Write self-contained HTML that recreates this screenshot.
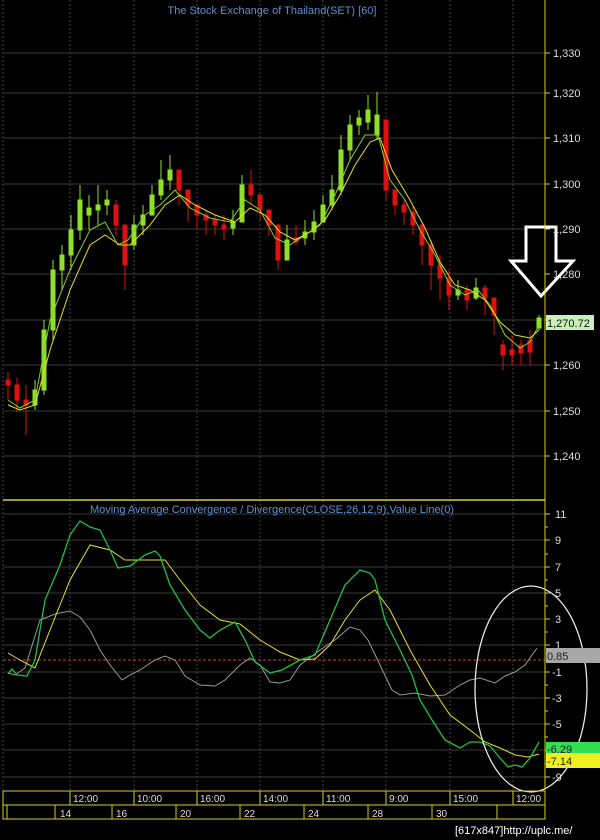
<!DOCTYPE html>
<html><head><meta charset="utf-8"><style>
html,body{margin:0;padding:0;background:#000;width:600px;height:840px;overflow:hidden}
svg{display:block}
text{font-family:"Liberation Sans",sans-serif}
</style></head><body>
<svg width="600" height="840" viewBox="0 0 600 840" xmlns="http://www.w3.org/2000/svg">
<rect width="600" height="840" fill="#000"/>
<!-- grid -->
<g stroke="#3a3a3a" stroke-width="1">
<line x1="3" y1="53" x2="545" y2="53"/><line x1="3" y1="93" x2="545" y2="93"/><line x1="3" y1="138" x2="545" y2="138"/><line x1="3" y1="184" x2="545" y2="184"/><line x1="3" y1="229" x2="545" y2="229"/><line x1="3" y1="274" x2="545" y2="274"/><line x1="3" y1="320" x2="545" y2="320"/><line x1="3" y1="365" x2="545" y2="365"/><line x1="3" y1="411" x2="545" y2="411"/><line x1="3" y1="456" x2="545" y2="456"/>
<line x1="3" y1="514" x2="545" y2="514"/><line x1="3" y1="540" x2="545" y2="540"/><line x1="3" y1="567" x2="545" y2="567"/><line x1="3" y1="593" x2="545" y2="593"/><line x1="3" y1="619" x2="545" y2="619"/><line x1="3" y1="645" x2="545" y2="645"/><line x1="3" y1="672" x2="545" y2="672"/><line x1="3" y1="698" x2="545" y2="698"/><line x1="3" y1="724" x2="545" y2="724"/><line x1="3" y1="750" x2="545" y2="750"/><line x1="3" y1="777" x2="545" y2="777"/>
</g>
<g stroke="#444" stroke-dasharray="2,2">
<line x1="3" y1="0" x2="3" y2="790"/><line x1="70" y1="0" x2="70" y2="790"/><line x1="134" y1="0" x2="134" y2="790"/><line x1="197" y1="0" x2="197" y2="790"/><line x1="260" y1="0" x2="260" y2="790"/><line x1="323" y1="0" x2="323" y2="790"/><line x1="386" y1="0" x2="386" y2="790"/><line x1="450" y1="0" x2="450" y2="790"/><line x1="513" y1="0" x2="513" y2="790"/>
</g>
<text x="272" y="14" fill="#5d8fd0" font-size="11" text-anchor="middle">The Stock Exchange of Thailand(SET) [60]</text>
<!-- candles -->
<g fill="#e01010" stroke="#e01010">
<path d="M8 372V400M17 378V412M26 385V435M116 200V235M125 240V290M179 180V205M188 195V222M197 205V230M206 210V235M215 215V235M224 215V240M251 170V205M260 195V220M269 210V235M278 235V270M296 225V245M386 120V200M395 195V215M404 200V225M413 205V235M422 225V265M431 240V290M440 255V300M449 270V310M467 285V310M485 285V315M494 300V335M503 340V370M512 335V365M521 340V365M530 330V365" fill="none"/>
<rect x="6" y="380" width="4" height="5"/><rect x="15" y="385" width="4" height="15"/><rect x="24" y="400" width="4" height="5"/><rect x="114" y="205" width="4" height="20"/><rect x="123" y="225" width="4" height="40"/><rect x="177" y="170" width="4" height="20"/><rect x="186" y="190" width="4" height="15"/><rect x="195" y="205" width="4" height="10"/><rect x="204" y="215" width="4" height="5"/><rect x="213" y="220" width="4" height="5"/><rect x="222" y="225" width="4" height="4"/><rect x="249" y="185" width="4" height="10"/><rect x="258" y="195" width="4" height="15"/><rect x="267" y="210" width="4" height="15"/><rect x="276" y="225" width="4" height="35"/><rect x="294" y="238" width="4" height="4"/><rect x="384" y="120" width="4" height="70"/><rect x="393" y="190" width="4" height="15"/><rect x="402" y="205" width="4" height="7"/><rect x="411" y="212" width="4" height="13"/><rect x="420" y="225" width="4" height="20"/><rect x="429" y="245" width="4" height="20"/><rect x="438" y="265" width="4" height="13"/><rect x="447" y="278" width="4" height="17"/><rect x="465" y="290" width="4" height="10"/><rect x="483" y="288" width="4" height="10"/><rect x="492" y="298" width="4" height="17"/><rect x="501" y="345" width="4" height="10"/><rect x="510" y="350" width="4" height="5"/><rect x="519" y="345" width="4" height="8"/><rect x="528" y="340" width="4" height="12"/>
</g>
<g fill="#8fe02a" stroke="#8fe02a">
<path d="M35 380V410M44 320V395M53 260V340M62 245V290M71 215V270M80 185V240M89 195V230M98 185V225M107 190V215M134 215V250M143 205V235M152 185V215M161 160V200M170 155V190M233 210V235M242 175V200M287 225V260M305 220V245M314 210V240M323 195V220M332 175V210M341 135V195M350 115V160M359 110V135M368 95V130M377 92V140M458 280V300M476 278V300M539 315V330" fill="none"/>
<rect x="33" y="390" width="4" height="15"/><rect x="42" y="330" width="4" height="60"/><rect x="51" y="270" width="4" height="60"/><rect x="60" y="255" width="4" height="15"/><rect x="69" y="230" width="4" height="25"/><rect x="78" y="200" width="4" height="30"/><rect x="87" y="208" width="4" height="7"/><rect x="96" y="205" width="4" height="5"/><rect x="105" y="200" width="4" height="5"/><rect x="132" y="225" width="4" height="20"/><rect x="141" y="215" width="4" height="10"/><rect x="150" y="195" width="4" height="20"/><rect x="159" y="180" width="4" height="15"/><rect x="168" y="170" width="4" height="10"/><rect x="231" y="222" width="4" height="6"/><rect x="240" y="185" width="4" height="37"/><rect x="285" y="240" width="4" height="20"/><rect x="303" y="232" width="4" height="6"/><rect x="312" y="222" width="4" height="10"/><rect x="321" y="205" width="4" height="17"/><rect x="330" y="190" width="4" height="15"/><rect x="339" y="150" width="4" height="40"/><rect x="348" y="125" width="4" height="25"/><rect x="357" y="118" width="4" height="7"/><rect x="366" y="110" width="4" height="12"/><rect x="375" y="115" width="4" height="20"/><rect x="456" y="290" width="4" height="5"/><rect x="474" y="288" width="4" height="10"/><rect x="537" y="318" width="4" height="10"/>
</g>
<polyline fill="none" stroke="#7fd02a" stroke-width="1" points="8,400 20,408 35,400 50,320 70,270 90,230 105,222 118,245 128,240 145,215 160,205 175,190 190,208 210,218 230,222 245,200 260,210 275,238 290,245 305,235 320,225 335,195 350,160 365,135 378,135 390,180 405,200 420,230 435,255 450,285 465,295 478,290 490,305 505,335 520,348 530,342 539,325"/>
<polyline fill="none" stroke="#e8e020" stroke-width="1" points="8,405 20,410 35,405 50,350 70,290 90,245 105,235 120,245 130,245 150,225 165,205 180,195 195,205 215,215 235,222 250,208 265,215 280,232 295,240 310,232 325,220 340,195 355,165 370,142 380,138 392,170 410,200 425,228 440,262 455,285 470,290 485,300 500,322 515,335 530,338 539,330"/>
<!-- arrow -->
<path d="M526 227H556V261H573L541 296L511 261H526Z" fill="#000" stroke="#fff" stroke-width="3"/>
<!-- separator -->
<line x1="3" y1="500" x2="545" y2="500" stroke="#d8d020" stroke-width="1.5"/>
<text x="272" y="513" fill="#5d8fd0" font-size="11" text-anchor="middle">Moving Average Convergence / Divergence(CLOSE,26,12,9),Value Line(0)</text>
<line x1="3" y1="660" x2="545" y2="660" stroke="#c04040" stroke-dasharray="3,2"/>
<polyline fill="none" stroke="#999" points="8,673 15,675 25,668 40,620 55,614 70,611 80,617 90,630 100,650 110,665 122,680 130,675 140,670 155,660 165,656 175,660 185,676 200,685 215,686 225,680 240,665 250,658 260,665 270,682 280,683 290,680 300,665 320,650 335,640 350,627 360,630 368,640 380,665 392,690 400,695 415,693 430,696 445,695 460,685 470,680 480,678 495,683 505,676 515,672 525,665 537,648"/>
<polyline fill="none" stroke="#e8e020" points="8,653 20,660 35,668 50,630 70,580 90,545 110,550 125,560 150,560 165,560 180,580 200,605 220,620 240,624 260,640 280,652 300,660 315,659 330,645 345,620 360,600 375,590 390,610 410,650 430,685 450,715 470,730 485,742 500,748 515,755 528,757 539,754"/>
<polyline fill="none" stroke="#20c040" stroke-width="1.3" points="8,674 12,669 17,675 27,676 35,660 45,600 60,565 70,535 80,521 90,527 100,530 110,550 118,568 130,566 145,555 155,551 160,556 170,585 185,610 200,630 210,638 220,630 235,622 245,640 255,662 270,673 282,670 300,660 315,655 330,620 345,585 360,570 370,573 375,580 385,620 400,650 412,675 420,700 432,720 445,740 460,748 470,742 480,742 490,746 500,758 508,767 515,765 522,767 530,758 539,742"/>
<ellipse cx="531" cy="689" rx="56" ry="103" fill="none" stroke="#e8e8e8" stroke-width="1.3"/>
<!-- right axis -->
<line x1="545" y1="0" x2="545" y2="790" stroke="#d8d020"/>
<g stroke="#d8d020">
<path d="M545 53h5M545 93h5M545 138h5M545 184h5M545 229h5M545 274h5M545 320h5M545 365h5M545 411h5M545 456h5M545 514h5M545 527h3M545 540h5M545 554h3M545 567h5M545 580h3M545 593h5M545 606h3M545 619h5M545 632h3M545 645h5M545 672h5M545 685h3M545 698h5M545 711h3M545 724h5M545 737h3M545 750h5M545 764h3M545 777h5"/>
</g>
<g fill="#ddd" font-size="11">
<text x="553" y="57">1,330</text><text x="553" y="97">1,320</text><text x="553" y="142">1,310</text><text x="553" y="188">1,300</text><text x="553" y="233">1,290</text><text x="553" y="278">1,280</text><text x="553" y="369">1,260</text><text x="553" y="415">1,250</text><text x="553" y="460">1,240</text>
<text x="555" y="518">11</text><text x="555" y="544">9</text><text x="555" y="571">7</text><text x="555" y="597">5</text><text x="555" y="623">3</text><text x="555" y="649">1</text><text x="552" y="676">-1</text><text x="552" y="702">-3</text><text x="552" y="728">-5</text><text x="552" y="781">-9</text>
</g>
<rect x="546" y="315" width="48" height="15" fill="#c8f0b8"/>
<text x="547" y="327" fill="#111" font-size="11">1,270.72</text>
<rect x="546" y="648" width="54" height="15" fill="#a8a8a8"/>
<text x="547" y="660" fill="#222" font-size="11">0.85</text>
<rect x="546" y="742" width="54" height="11" fill="#30e050"/>
<text x="547" y="753" fill="#222" font-size="11">-6.29</text>
<rect x="546" y="753" width="54" height="15" fill="#f0f020"/>
<text x="547" y="765" fill="#222" font-size="11">-7.14</text>
<!-- time axis -->
<g stroke="#d8d020" fill="none">
<rect x="3" y="791" width="542" height="14"/><rect x="3" y="805" width="542" height="14"/>
<path d="M70 791v14M134 791v14M197 791v14M260 791v14M323 791v14M386 791v14M450 791v14M513 791v14M7 805v14M55 805v14M112 805v14M176 805v14M240 805v14M304 805v14M368 805v14M432 805v14M497 805v14"/>
</g>
<g fill="#ddd" font-size="10">
<text x="73" y="802">12:00</text><text x="137" y="802">10:00</text><text x="200" y="802">16:00</text><text x="263" y="802">14:00</text><text x="326" y="802">11:00</text><text x="389" y="802">9:00</text><text x="453" y="802">15:00</text><text x="516" y="802">12:00</text>
<text x="60" y="817">14</text><text x="116" y="817">16</text><text x="180" y="817">20</text><text x="244" y="817">22</text><text x="308" y="817">24</text><text x="372" y="817">28</text><text x="436" y="817">30</text>
</g>
<text x="455" y="834" fill="#fff" font-size="11" font-family="Liberation Mono, monospace">[617x847]http://uplc.me/</text>
</svg>
</body></html>
